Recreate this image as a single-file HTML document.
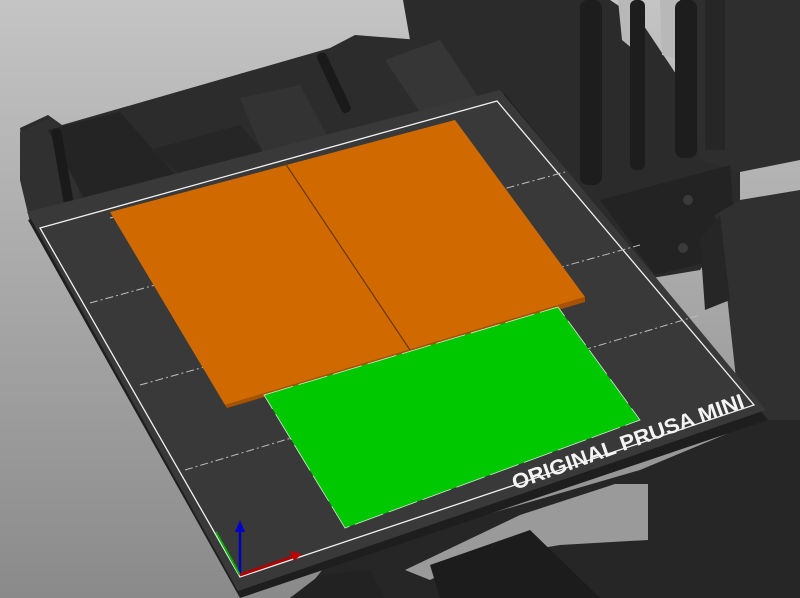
<!DOCTYPE html>
<html><head><style>
html,body{margin:0;padding:0;width:800px;height:598px;overflow:hidden}
svg{display:block}
</style></head><body>
<svg width="800" height="598" viewBox="0 0 800 598" xmlns="http://www.w3.org/2000/svg">
<defs>
<linearGradient id="bg" x1="0" y1="0" x2="0" y2="1">
<stop offset="0" stop-color="#c4c4c4"/><stop offset="1" stop-color="#8a8a8a"/>
</linearGradient>
</defs>
<rect width="800" height="598" fill="url(#bg)"/>
<!-- upper right frame -->
<polygon points="403,0 610,0 640,20 740,170 740,210 700,270 640,280 560,210 480,120 410,40" fill="#2b2b2b"/>
<polygon points="680,0 800,0 800,160 740,172 700,160" fill="#2e2e2e"/>
<polygon points="618,0 640,0 640,55 622,40" fill="#b8b8b8"/>
<polygon points="660,0 680,0 680,60 662,55" fill="#b8b8b8"/>
<rect x="580" y="0" width="22" height="185" rx="8" fill="#1d1d1d"/>
<rect x="630" y="0" width="15" height="170" rx="6" fill="#1d1d1d"/>
<rect x="675" y="0" width="22" height="158" rx="8" fill="#1d1d1d"/>
<rect x="705" y="0" width="20" height="150" fill="#262626"/>
<polygon points="600,200 730,165 737,255 655,275" fill="#232323"/>
<circle cx="688" cy="200" r="5" fill="#3a3a3a"/><circle cx="683" cy="248" r="5" fill="#3a3a3a"/>
<!-- upper left frame -->
<polygon points="20,128 48,115 62,125 330,48 355,35 420,40 480,105 30,222" fill="#2c2c2c"/>
<polygon points="20,132 50,118 70,132 82,212 30,222 20,180" fill="#303030"/>
<polygon points="48,130 120,112 180,180 90,210" fill="#242424"/>
<polygon points="150,150 240,125 280,170 200,190" fill="#262626"/>
<polygon points="240,98 300,85 340,160 270,170" fill="#333"/>
<polygon points="385,60 440,40 480,100 420,112" fill="#363636"/>
<rect x="58" y="128" width="10" height="90" rx="4" fill="#1a1a1a" transform="rotate(-10 63 170)"/>
<rect x="330" y="50" width="10" height="65" rx="4" fill="#1a1a1a" transform="rotate(-25 335 85)"/>
<!-- right panel -->
<polygon points="715,215 740,200 800,190 800,598 760,598 722,250" fill="#303030"/>
<polygon points="700,240 720,215 730,300 705,310" fill="#262626"/>
<!-- lower frame -->
<polygon points="300,598 330,560 640,470 760,420 800,420 800,598" fill="#262626"/>
<polygon points="405,570 520,515 615,484 648,484 648,540 560,545 470,560 430,580" fill="#9a9a9a"/>
<polygon points="430,565 530,530 600,598 440,598" fill="#1c1c1c"/>
<polygon points="290,598 320,575 370,570 385,598" fill="#222"/>
<!-- bed plate -->
<polygon points="28,220 505,94 768,420 240,598" fill="#1e1e1e"/>
<polygon points="27,212 500,90 766,410 238,591" fill="#393939"/>
<!-- white outline -->
<polygon points="40,228 497,101 754,405 240,577" fill="none" stroke="#f0f0f0" stroke-width="1.3"/>
<!-- grid lines -->
<g stroke="#bdbdbd" stroke-width="1" stroke-dasharray="8,3,2,3" fill="none">
<line x1="90" y1="303" x2="565" y2="172"/>
<line x1="140" y1="385" x2="640" y2="245"/>
<line x1="185" y1="470" x2="700" y2="315"/>
<line x1="110" y1="218" x2="310" y2="165"/>
</g>
<!-- text -->
<text x="0" y="0" transform="translate(515,490) rotate(-19.8)" font-family="Liberation Sans, sans-serif" font-weight="bold" font-size="21" textLength="245" lengthAdjust="spacingAndGlyphs" fill="#f4f4f4">ORIGINAL PRUSA MINI</text>
<!-- orange -->
<polygon points="110,212 455,120 585,297 225,405" fill="#d06a00"/>
<polygon points="225,405 585,297 585,302 227,408" fill="#a65200"/>
<line x1="285" y1="163" x2="410" y2="350" stroke="#6b3a00" stroke-width="1.2"/>
<!-- green -->
<polygon points="264,395 558,307 640,420 345,528" fill="#00c800"/>
<polygon points="264,395 558,307 640,420 345,528" fill="none" stroke="#cfe8cf" stroke-width="0.8" stroke-dasharray="30,6"/>
<!-- axes -->
<line x1="240" y1="575" x2="240" y2="530" stroke="#0000c0" stroke-width="2.5"/>
<polygon points="235,532 245,532 240,520" fill="#0000c8"/>
<line x1="240" y1="575" x2="216" y2="532" stroke="#00b000" stroke-width="2"/>
<line x1="240" y1="575" x2="295" y2="556" stroke="#b00000" stroke-width="3"/>
<polygon points="290,551 302,554 294,561" fill="#c00000"/>
</svg>
</body></html>
